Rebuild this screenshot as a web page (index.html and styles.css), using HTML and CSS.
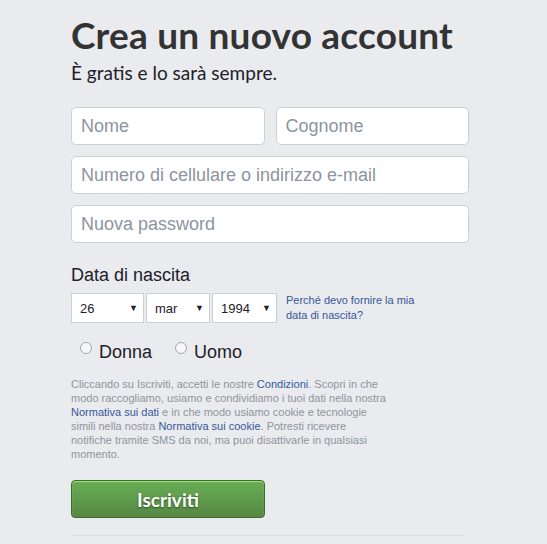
FILE: index.html
```html
<!DOCTYPE html>
<html lang="it">
<head>
<meta charset="utf-8">
<title>Crea un nuovo account</title>
<link rel="stylesheet" href="styles.css">
</head>
<body>
<main class="signup">
  <h1 class="title">Crea un nuovo account</h1>
  <p class="subtitle">È gratis e lo sarà sempre.</p>
  <form class="form">
    <div class="row">
      <input class="field" type="text" placeholder="Nome">
      <input class="field" type="text" placeholder="Cognome">
    </div>
    <input class="field" type="text" placeholder="Numero di cellulare o indirizzo e-mail">
    <input class="field" type="password" placeholder="Nuova password">
    <div class="birth-label">Data di nascita</div>
    <div class="birth">
      <div class="sel sel-day"><select><option>26</option></select></div>
      <div class="sel sel-month"><select><option>mar</option></select></div>
      <div class="sel sel-year"><select><option>1994</option></select></div>
      <a class="why" href="#">Perché devo fornire la mia data di nascita?</a>
    </div>
    <div class="gender">
      <label class="radio"><input type="radio" name="g"><span>Donna</span></label>
      <label class="radio"><input type="radio" name="g"><span>Uomo</span></label>
    </div>
    <p class="terms">Cliccando su Iscriviti, accetti le nostre <a href="#">Condizioni</a>. Scopri in che modo raccogliamo, usiamo e condividiamo i tuoi dati nella nostra <a href="#">Normativa sui dati</a> e in che modo usiamo cookie e tecnologie simili nella nostra <a href="#">Normativa sui cookie</a>. Potresti ricevere notifiche tramite SMS da noi, ma puoi disattivarle in qualsiasi momento.</p>
    <button class="submit" type="button">Iscriviti</button>
  </form>
  <hr class="sep">
</main>
</body>
</html>
```

FILE: styles.css
```css
html, body {
  margin: 0;
  padding: 0;
  background: #e9ebee;
}
body {
  font-family: "Liberation Sans", Arial, sans-serif;
  color: #1d2129;
}
.signup {
  width: 398px;
  margin-left: 71px;
  padding-top: 13px;
}
.title {
  margin: 0;
  font-family: Lato, "Open Sans", sans-serif;
  font-weight: 700;
  font-size: 37px;
  line-height: 44px;
  color: #333;
  letter-spacing: 0.2px;
}
.subtitle {
  margin: 4px 0 0;
  font-family: Lato, "Open Sans", sans-serif;
  font-size: 19px;
  line-height: 24px;
  color: #1d2129;
}
.form {
  display: flex;
  flex-direction: column;
  gap: 11px;
  margin-top: 22px;
}
.row {
  display: flex;
  gap: 11px;
}
.field {
  box-sizing: border-box;
  width: 100%;
  height: 38px;
  margin: 0;
  padding: 0 9px;
  border: 1px solid #ccd0d5;
  border-radius: 5px;
  background: #fff;
  font-family: "Liberation Sans", Arial, sans-serif;
  font-size: 18px;
  color: #1d2129;
}
.row .field {
  flex: 1;
  min-width: 0;
}
.field::placeholder {
  color: #8d949e;
}
.birth-label {
  margin-top: 10px;
  font-size: 18px;
  line-height: 22px;
  color: #1d2129;
}
.birth {
  display: flex;
  align-items: center;
  gap: 2px;
  margin-top: -4px;
}
.sel {
  position: relative;
  height: 30px;
}
.sel select {
  box-sizing: border-box;
  height: 30px;
  width: 100%;
  margin: 0;
  padding: 0 0 0 8px;
  border: 1px solid #ccd0d5;
  border-radius: 0;
  background: #fff;
  -webkit-appearance: none;
  appearance: none;
  font-family: "Liberation Sans", Arial, sans-serif;
  font-size: 13px;
  color: #1d2129;
}
.sel::after {
  content: "▼";
  position: absolute;
  right: 6px;
  top: 10px;
  font-size: 9px;
  line-height: 10px;
  color: #1d2129;
  pointer-events: none;
}
.sel-day { width: 73px; }
.sel-month { width: 64px; }
.sel-year { width: 65px; }
.why {
  margin-left: 7px;
  font-size: 11px;
  line-height: 15px;
  color: #365899;
  text-decoration: none;
  width: 140px;
}
.gender {
  display: flex;
  gap: 23px;
  margin-top: 7px;
  padding-left: 9px;
}
.radio {
  display: flex;
  align-items: center;
  font-size: 18px;
  line-height: 22px;
  color: #1d2129;
}
.radio input {
  width: 12px;
  height: 12px;
  margin: 0 7px 8px 0;
  opacity: 0.6;
}
.terms {
  margin: 3px 0 0;
  width: 316px;
  font-size: 11px;
  line-height: 14px;
  color: #90949c;
}
.terms a {
  color: #365899;
  text-decoration: none;
}
.submit {
  box-sizing: border-box;
  width: 194px;
  height: 38px;
  margin-top: 8px;
  border: 1px solid #3b6e22;
  border-radius: 4px;
  background: linear-gradient(#67ae55, #578843);
  box-shadow: inset 0 1px 1px #a4e388;
  color: #fff;
  font-family: Lato, "Open Sans", sans-serif;
  font-weight: 700;
  font-size: 19px;
  text-shadow: 0 1px 2px rgba(0, 0, 0, 0.5);
  cursor: pointer;
}
.sep {
  margin: 17px 0 0;
  width: 393px;
  border: 0;
  border-top: 1px solid #dadde1;
}
```
